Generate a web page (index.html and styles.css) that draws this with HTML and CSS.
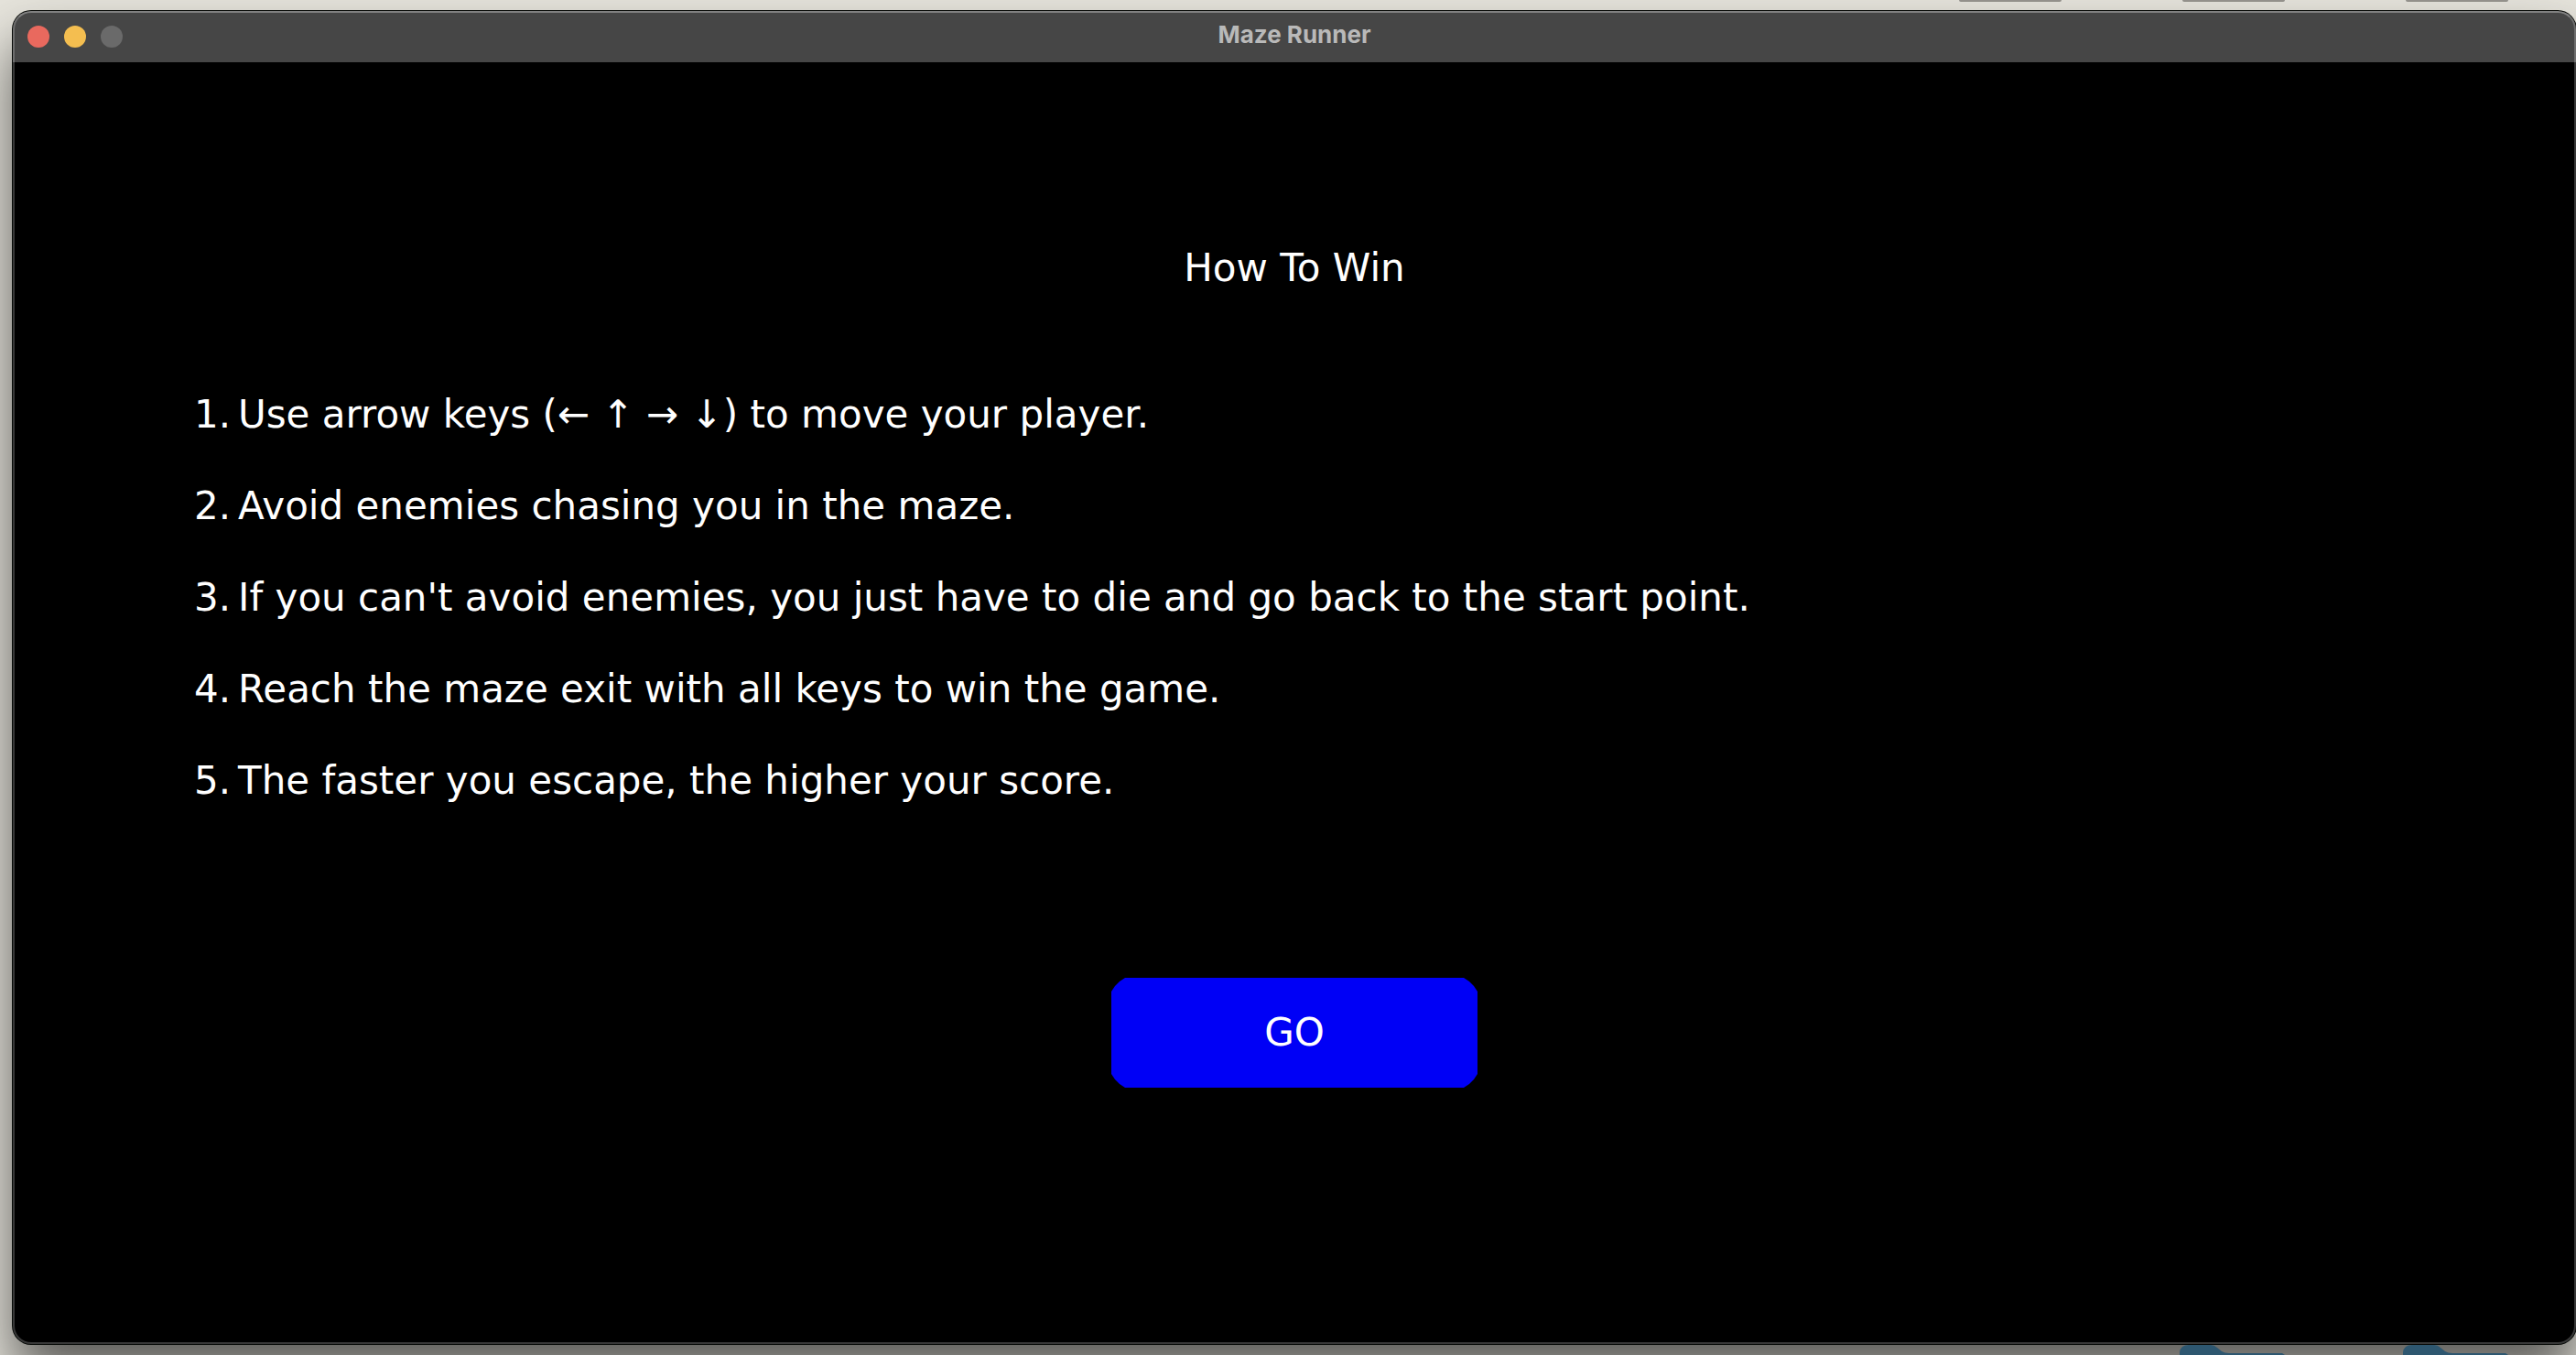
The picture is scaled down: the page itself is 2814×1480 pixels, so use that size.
FILE: index.html
```html
<!DOCTYPE html>
<html lang="en">
<head>
<meta charset="utf-8">
<title>Maze Runner</title>
<link rel="stylesheet" href="styles.css">
</head>
<body class="desktop">
  <div class="labels" aria-hidden="true">
    <span class="label"></span><span class="label"></span><span class="label"></span>
  </div>
  <main class="window">
    <header class="titlebar">
      <div class="lights">
        <button class="light light-close" type="button" aria-label="Close"></button>
        <button class="light light-minimize" type="button" aria-label="Minimize"></button>
        <button class="light light-zoom" type="button" aria-label="Zoom" disabled></button>
      </div>
      <span class="window-title">Maze Runner</span>
    </header>
    <section class="screen">
      <h1 class="heading">How To Win</h1>
      <ol class="rules">
        <li class="rule"><span class="number">1.</span><span>Use arrow keys (← ↑ → ↓) to move your player.</span></li>
        <li class="rule"><span class="number">2.</span><span>Avoid enemies chasing you in the maze.</span></li>
        <li class="rule"><span class="number">3.</span><span>If you can't avoid enemies, you just have to die and go back to the start point.</span></li>
        <li class="rule"><span class="number">4.</span><span>Reach the maze exit with all keys to win the game.</span></li>
        <li class="rule"><span class="number">5.</span><span>The faster you escape, the higher your score.</span></li>
      </ol>
      <button class="go" type="button">GO</button>
    </section>
  </main>
  <div class="folders" aria-hidden="true">
    <svg class="folder" viewBox="0 0 115 11"><path d="M0 11V8Q1 0 10 0H34Q38 0 41 3L46 7Q49 9 54 9H112L115 11Z"/></svg>
    <svg class="folder" viewBox="0 0 115 11"><path d="M0 11V8Q1 0 10 0H34Q38 0 41 3L46 7Q49 9 54 9H112L115 11Z"/></svg>
  </div>
</body>
</html>
```
FILE: styles.css
```css
* {
  box-sizing: border-box;
}

.desktop {
  position: relative;
  display: flex;
  flex-direction: column;
  min-height: 100vh;
  margin: 0;
  padding: 12px 0 12px 14px;
  overflow: hidden;
  background: #e6e4dc;
  font-family: Inter, "Liberation Sans", sans-serif;
}

/* Desktop items peeking out around the window */
.labels,
.folders {
  position: absolute;
  right: 74px;
  display: flex;
}

.labels {
  top: 0;
  gap: 132px;
}

.label {
  width: 112px;
  height: 2px;
  border-radius: 0 0 4px 4px;
  background: #98958f;
}

.folders {
  bottom: 0;
  gap: 129px;
}

.folder {
  display: block;
  width: 115px;
  height: 11px;
  fill: #2e5770;
}

.window {
  position: relative;
  display: flex;
  flex: 1;
  flex-direction: column;
  border-radius: 20px;
  background: #000;
  box-shadow: 0 0 0 1px #080b08, 0 36px 60px rgba(0, 0, 0, 0.6);
}

/* Thin light rim inside the window edge */
.window::after {
  position: absolute;
  inset: 0;
  border: 2px solid rgba(255, 255, 255, 0.22);
  border-top-color: rgba(255, 255, 255, 0.32);
  border-radius: 20px;
  content: "";
  pointer-events: none;
}

.titlebar {
  display: grid;
  grid-template-columns: 1fr auto 1fr;
  align-items: center;
  height: 56px;
  padding: 0 16px;
  border-radius: 20px 20px 0 0;
  background: #464646;
}

.lights {
  display: flex;
  gap: 16px;
}

.light {
  width: 24px;
  height: 24px;
  padding: 0;
  border: 0;
  border-radius: 50%;
}

.light-close {
  background: #e9695e;
}

.light-minimize {
  background: #f4be50;
}

.light-zoom {
  background: #6a6a6a;
}

.window-title {
  padding-bottom: 4px;
  color: #b9b9b9;
  font-size: 26px;
  font-weight: 700;
  line-height: 32px;
}

.screen {
  display: flex;
  flex: 1;
  flex-direction: column;
  padding: 195px 198px 64px;
  color: #fff;
  font-family: "DejaVu Sans", sans-serif;
  font-size: 42px;
  line-height: 60px;
}

.heading {
  margin: 0 0 100px;
  font-size: 42px;
  font-weight: 400;
  text-align: center;
}

.rules {
  display: flex;
  flex-direction: column;
  gap: 40px;
  margin: 0 0 185px;
  padding: 0;
  list-style: none;
}

.rule {
  display: flex;
}

.number {
  flex: none;
  width: 48px;
}

.go {
  align-self: center;
  width: 400px;
  height: 120px;
  border: 0;
  background: #0000f6;
  color: #fff;
  font: inherit;
  clip-path: polygon(0 15px, 4px 9px, 9px 4px, 15px 0, calc(100% - 15px) 0, calc(100% - 9px) 4px, calc(100% - 4px) 9px, 100% 15px, 100% calc(100% - 15px), calc(100% - 4px) calc(100% - 9px), calc(100% - 9px) calc(100% - 4px), calc(100% - 15px) 100%, 15px 100%, 9px calc(100% - 4px), 4px calc(100% - 9px), 0 calc(100% - 15px));
}
```
